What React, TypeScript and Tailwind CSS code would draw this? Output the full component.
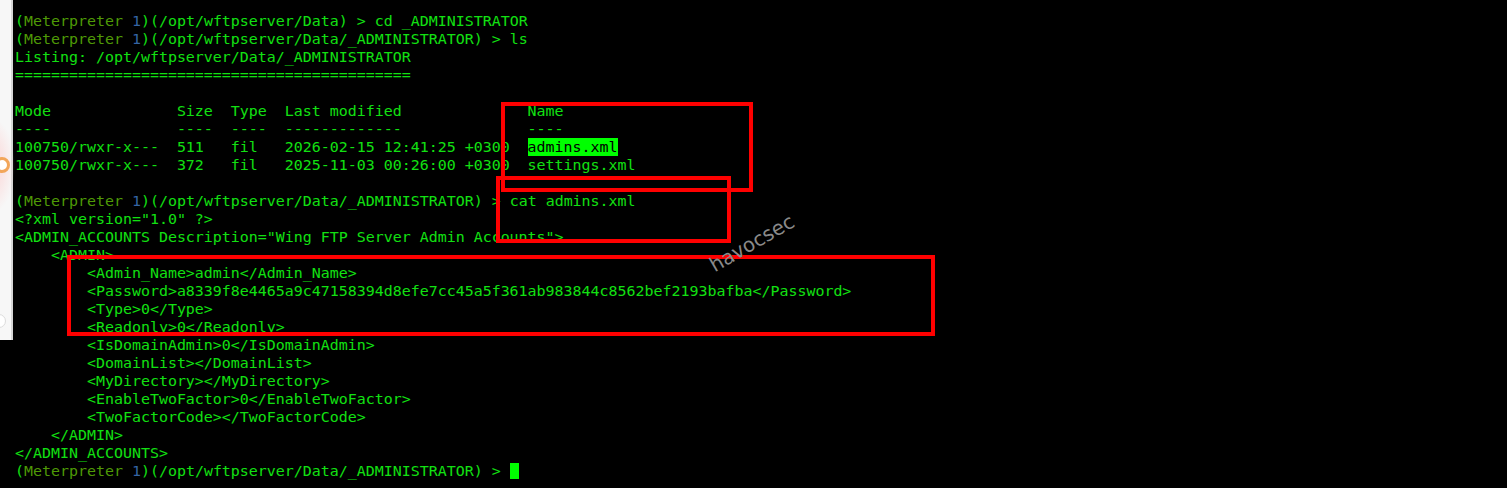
const G = "text-[#12e012]";

function Prompt({ path, cmd }: { path: string; cmd?: string }) {
  return (
    <div>
      <span className={G}>(</span>
      <span className="text-[#4e9a06]">Meterpreter </span>
      <span className="text-[#3465a4]">1</span>
      <span className={G}>)({path}) &gt; {cmd}</span>
    </div>
  );
}

function Line({ children }: { children?: React.ReactNode }) {
  return <div className={G}>{children ?? "\u00a0"}</div>;
}

export default function App() {
  const xmlBody = [
    "    <ADMIN>",
    "        <Admin_Name>admin</Admin_Name>",
    "        <Password>a8339f8e4465a9c47158394d8efe7cc45a5f361ab983844c8562bef2193bafba</Password>",
    "        <Type>0</Type>",
    "        <Readonly>0</Readonly>",
    "        <IsDomainAdmin>0</IsDomainAdmin>",
    "        <DomainList></DomainList>",
    "        <MyDirectory></MyDirectory>",
    "        <EnableTwoFactor>0</EnableTwoFactor>",
    "        <TwoFactorCode></TwoFactorCode>",
    "    </ADMIN>",
    "</ADMIN_ACCOUNTS>",
  ];

  return (
    <div className="relative flex h-[488px] w-[1507px] overflow-hidden bg-black">
      {/* sliver of the window behind */}
      <div className="relative h-[340px] w-[13px] shrink-0 border-r-2 border-[#d6d6d6] bg-[#f7f7f7]">
        <div className="absolute left-[-30px] top-[118px] h-[95px] w-[45px] rounded-full bg-[radial-gradient(closest-side,#fbd3d3,transparent)]" />
        <div className="absolute left-[-6px] top-[157px] h-[16px] w-[16px] rounded-full border-[3px] border-[#f2a65a] bg-white" />
        <div className="absolute left-[-8px] top-[314px] h-[14px] w-[14px] rounded-full border border-[#dcdcdc] bg-white" />
      </div>

      <div
        className="whitespace-pre pl-[2px] pt-[12px] text-[14.95px] leading-[18px]"
        style={{ fontFamily: '"DejaVu Sans Mono", "Liberation Mono", monospace' }}
      >
        <Prompt path="/opt/wftpserver/Data" cmd="cd _ADMINISTRATOR" />
        <Prompt path="/opt/wftpserver/Data/_ADMINISTRATOR" cmd="ls" />
        <Line>Listing: /opt/wftpserver/Data/_ADMINISTRATOR</Line>
        <Line>============================================</Line>
        <Line />
        <Line>Mode              Size  Type  Last modified              Name</Line>
        <Line>----              ----  ----  -------------              ----</Line>
        <Line>
          {"100750/rwxr-x---  511   fil   2026-02-15 12:41:25 +0300  "}
          <span className="bg-[#00ff00] text-black">admins.xml</span>
        </Line>
        <Line>100750/rwxr-x---  372   fil   2025-11-03 00:26:00 +0300  settings.xml</Line>
        <Line />
        <Prompt path="/opt/wftpserver/Data/_ADMINISTRATOR" cmd="cat admins.xml" />
        <Line>{'<?xml version="1.0" ?>'}</Line>
        <Line>{'<ADMIN_ACCOUNTS Description="Wing FTP Server Admin Accounts">'}</Line>
        {xmlBody.map((l, i) => (
          <Line key={i}>{l}</Line>
        ))}
        <div className="flex items-center">
          <Prompt path="/opt/wftpserver/Data/_ADMINISTRATOR" cmd="" />
          <span className="h-[16px] w-[9px] bg-[#00ff00]" />
        </div>
      </div>

      {/* annotation boxes */}
      <div className="absolute left-[501px] top-[102px] h-[90px] w-[252px] border-4 border-[#ff0000]" />
      <div className="absolute left-[496px] top-[176px] h-[67px] w-[235px] border-4 border-[#ff0000]" />
      <div className="absolute left-[67px] top-[255px] h-[81px] w-[868px] border-4 border-[#ff0000]" />

      {/* watermark */}
      <div
        className="absolute left-[705px] top-[228px] -rotate-[30deg] text-[20px] text-[#8a8a8a]"
        style={{ fontFamily: '"DejaVu Sans", sans-serif' }}
      >
        havocsec
      </div>
    </div>
  );
}
